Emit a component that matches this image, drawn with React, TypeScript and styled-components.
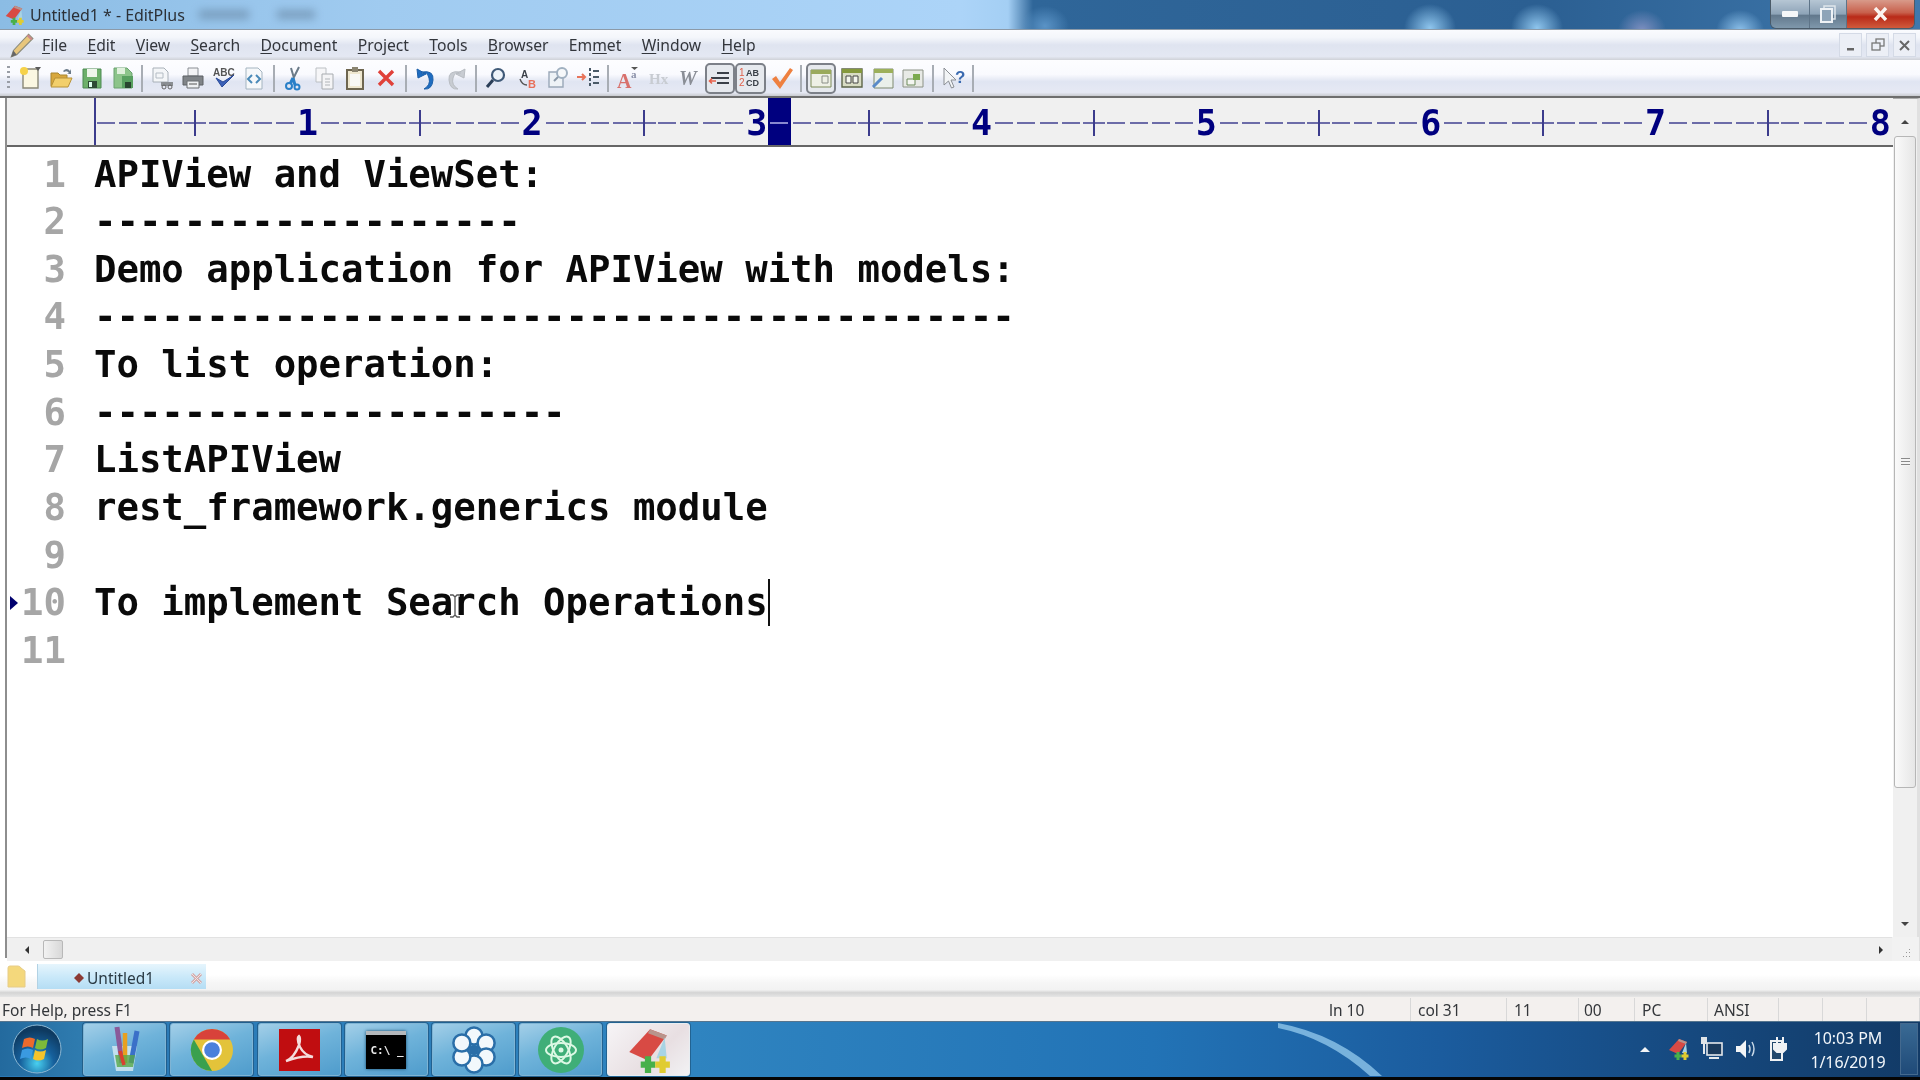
import React from "react";
import styled, { createGlobalStyle } from "styled-components";

const Global = createGlobalStyle`
  html, body { margin: 0; padding: 0; background: #000; }
  * { box-sizing: border-box; }
`;

const Page = styled.div`
  width: 1920px; height: 1080px; display: flex; flex-direction: column; overflow: hidden;
  font-family: "Noto Sans", "Open Sans", sans-serif; background: #fff; filter: blur(0.55px); position: relative;
`;

/* ---------- title bar ---------- */
const TitleBar = styled.div`
  height: 30px; flex: none; display: flex; align-items: center; padding-left: 3px; position: relative;
  background:
    radial-gradient(ellipse 26px 24px at 1430px 28px, #8fc6ee 0%, rgba(143,198,238,0) 100%),
    radial-gradient(ellipse 26px 24px at 1537px 28px, #8fc6ee 0%, rgba(143,198,238,0) 100%),
    radial-gradient(ellipse 24px 20px at 1642px 30px, #7d8fc0 0%, rgba(125,143,192,0) 100%),
    radial-gradient(ellipse 24px 20px at 1740px 30px, #8cc0ea 0%, rgba(140,192,234,0) 100%),
    radial-gradient(ellipse 24px 20px at 1045px 26px, #5a93c6 0%, rgba(90,147,198,0) 100%),
    linear-gradient(90deg, #8bbce4 0%, #a0cbf0 20%, #acd4f8 50%, #a4cff4 52.500%, #2f6699 53.800%, #2b5f92 80%, #3f78ac 100%);
  border-bottom: 1px solid #8c9aa8;
`;
const TitleText = styled.span`
  font-size: 16px; color: #2c3036; margin-left: 5px; white-space: nowrap; letter-spacing: -0.05px;
`;
const Smudge = styled.span<{ $w: number; $ml: number }>`
  width: ${(p) => p.$w}px; margin-left: ${(p) => p.$ml}px; height: 9px; background: #6c8caa; filter: blur(4px); opacity: .7;
`;
const WinControls = styled.div`
  margin-left: auto; margin-right: 5px; display: flex; height: 29px; align-self: flex-start;
  border: 1px solid #4a5a68; border-top: 0; border-radius: 0 0 6px 6px; overflow: hidden;
`;
const WinBtn = styled.div<{ $w: number; $close?: boolean }>`
  width: ${(p) => p.$w}px; display: flex; align-items: center; justify-content: center;
  background: ${(p) => p.$close ? "linear-gradient(180deg,#d89a8a 0%,#c8604c 45%,#b92a18 60%,#d05a3c 100%)" : "linear-gradient(180deg,#b6c6d4 0%,#8ea4b8 50%,#62788c 55%,#7f98ac 100%)"};
  border-right: ${(p) => p.$close ? "0" : "1px solid #5e7488"};
`;

/* ---------- menu bar ---------- */
const MenuBar = styled.div`
  height: 30px; flex: none; display: flex; align-items: center; padding-left: 8px;
  background: linear-gradient(180deg, #fafbfe 0%, #f4f6fb 25%, #dfe4f0 50%, #e4e8f3 88%, #cfd2d8 100%);
`;
const MenuItems = styled.div`
  display: flex; gap: 20.3px; margin-left: 8px; font-size: 15.7px; color: #33363c;
  u { text-underline-offset: 2px; text-decoration-thickness: 1px; }
`;
const MdiGroup = styled.div`
  margin-left: auto; margin-right: 4px; display: flex; gap: 4px;
`;
const MdiBtn = styled.div`
  width: 23px; height: 24px; display: flex; align-items: center; justify-content: center;
  border: 1px solid #d4dae6; background: #eceff6;
`;

/* ---------- toolbar ---------- */
const ToolBar = styled.div`
  height: 38px; flex: none; display: flex; align-items: center; padding-left: 7px;
  background: linear-gradient(180deg, #fdfdff 0%, #f9fafe 40%, #e0e5f2 60%, #e6e9f4 90%, #c9cbd0 100%);
  border-bottom: 2px solid #6e6e6e;
`;
const Grip = styled.div`
  width: 3px; height: 24px; margin-right: 5px;
  background: repeating-linear-gradient(180deg, #9a9ea6 0 2px, transparent 2px 5px);
`;
const Slot = styled.div<{ $on?: boolean }>`
  width: 30.75px; height: 31px; flex: none; display: flex; align-items: center; justify-content: center;
  ${(p) => p.$on && "border: 2px solid #7c8088; border-radius: 5px; background: #e6e9ee;"}
`;
const Sep = styled.div`
  width: 2px; height: 27px; margin: 0 3.4px; background: #a8adb4; flex: none;
`;

/* ---------- editor ---------- */
const Workspace = styled.div`
  flex: 1; min-height: 0; display: flex; background: #fff;
`;
const LeftEdge = styled.div`
  width: 7px; flex: none; margin-bottom: 3px; border-right: 2px solid #8e8e8e; background: #fff;
`;
const EditorColumn = styled.div`
  width: 1886px; flex: none; display: flex; flex-direction: column; min-height: 0;
`;
const Ruler = styled.div`
  height: 49px; flex: none; display: flex; background: #f0f0f0; padding-left: 87px; border-bottom: 2px solid #666;
`;
const RulerCell = styled.div<{ $hot?: boolean; $first?: boolean }>`
  width: 22.47px; flex: none; height: 47px; position: relative; display: flex; align-items: center; justify-content: center;
  padding-top: 3px;
  font: bold 35px "DejaVu Sans Mono", monospace; color: #00007f; line-height: 44px;
  background: ${(p) => p.$hot ? "#00007f" : "transparent"};
  ${(p) => p.$first && "border-left: 2px solid #3c3c8c;"}
`;
const Dash = styled.span<{ $hot?: boolean }>`
  width: 18px; height: 2px; background: ${(p) => p.$hot ? "#8888d0" : "#6c6ca8"};
`;
const Tick = styled.span`
  width: 100%; height: 2px; background: #6c6ca8; display: flex; justify-content: center; align-items: center;
  &::after { content: ""; width: 2px; height: 26px; background: #3c3c8c; flex: none; }
`;
const Body = styled.div`
  flex: 1; min-height: 0; padding-top: 3.5px; position: relative; background: #fff;
`;
const Row = styled.div`
  height: 47.64px; display: flex; align-items: center; white-space: pre;
  font: bold 37.3px/47.64px "DejaVu Sans Mono", monospace; color: #0a0a0a;
`;
const Marker = styled.div`
  width: 12px; flex: none; padding-left: 3px; display: flex; align-items: center;
`;
const Num = styled.div`
  width: 47px; flex: none; text-align: right; color: #a6a6a6;
`;
const Code = styled.div`
  margin-left: 28px; display: flex; align-items: center;
`;
const Caret = styled.span`
  width: 2.5px; height: 47px; background: #111; flex: none;
`;
const IBeam = styled.svg`
  position: absolute; left: 441px; top: 447px;
`;
const HScroll = styled.div`
  height: 24px; flex: none; display: flex; align-items: center; background: #f0f0f0; border-top: 1px solid #e2e2e2; padding-left: 9px;
`;
const ScrollArrow = styled.div`
  width: 22px; display: flex; justify-content: center; flex: none;
`;
const HThumb = styled.div`
  width: 20px; height: 19px; border: 1px solid #b8b8b8; border-radius: 2px; margin-left: 5px;
  background: linear-gradient(90deg, #f2f2f2, #d8d8d8);
`;
const RightArrowWrap = styled.div`
  margin-left: auto; margin-right: 1px; display: flex;
`;
const VScroll = styled.div`
  width: 27px; flex: none; display: flex; flex-direction: column; align-items: center; background: #f0f0f0;
  border-right: 3px solid #e0e0e0; border-top: 1px solid #aaa;
`;
const VArrow = styled.div<{ $h: number; $pt?: number }>`
  height: ${(p) => p.$h}px; padding-top: ${(p) => p.$pt ?? 0}px; display: flex; align-items: center; justify-content: center; flex: none;
`;
const VThumb = styled.div`
  width: 22px; height: 652px; flex: none; display: flex; align-items: center; justify-content: center;
  border: 1px solid #b6b6b6; border-radius: 3px; background: linear-gradient(90deg,#fafafa,#e6e6e6);
`;
const GripLines = styled.div`
  width: 9px; height: 8px; background: repeating-linear-gradient(180deg,#8a8a8a 0 1px,#f4f4f4 1px 3px);
`;
const VSpacer = styled.div`
  flex: 1;
`;
const SizeGrip = styled.div`
  width: 27px; height: 24px; flex: none; display: flex; align-items: flex-end; justify-content: center; padding-bottom: 3px; background: #f2f2f2;
`;

/* ---------- tabs + status ---------- */
const TabBar = styled.div`
  height: 36px; flex: none; display: flex; padding: 3px 0 8px 7px; align-items: stretch;
  background: linear-gradient(180deg, #ffffff 0%, #ffffff 38%, #f6f6f6 60%, #f2f2f2 80%, #d4d4d4 88%, #e6e6e6 100%);
`;
const FolderSlot = styled.div`
  width: 30px; flex: none; display: flex; align-items: center;
`;
const Tab = styled.div`
  width: 169px; display: flex; align-items: center; padding: 3px 0 0 36px; font-size: 15.5px; color: #2a3a44; gap: 3px;
  background: linear-gradient(180deg, #e6f5fd 0%, #c8e8f9 55%, #b5ddf4 100%); border-left: 1px solid #b2d2e4;
`;
const TabClose = styled.div`
  margin-left: auto; margin-right: 3px; display: flex;
`;
const StatusBar = styled.div`
  height: 24px; flex: none; display: flex; background: #f3f0ee; font-size: 15.5px; color: #33363a; align-items: center; padding-top: 1px;
`;
const StatusHelp = styled.div`
  flex: 1; padding-left: 2px;
`;
const Pane = styled.div<{ $w: number; $pad: number }>`
  width: ${(p) => p.$w}px; padding-left: ${(p) => p.$pad}px; height: 100%; line-height: 24px; flex: none;
  border-right: 1px solid #d8d8d8;
`;

/* ---------- taskbar ---------- */
const TaskBar = styled.div`
  height: 56px; flex: none; display: flex; align-items: flex-end; position: relative; padding-bottom: 1px;
  background: linear-gradient(90deg, #2a78b4 0%, #2f84c0 36%, #2273b6 60%, #1b5c9e 75%, #16497f 88%, #123a66 100%);
  border-top: 1px solid #56758e;
`;
const Swoosh = styled.svg`
  position: absolute; left: 1278px; top: 0;
`;
const Orb = styled.div`
  width: 83px; height: 54px; flex: none; display: flex; align-items: center; justify-content: center; padding-right: 9px;
  background: linear-gradient(90deg, #236a9e, #2f7cb0);
`;
const TaskButtons = styled.div`
  display: flex; gap: 4.3px; height: 53px; position: relative;
`;
const TaskBtn = styled.div<{ $on?: boolean }>`
  width: 83px; height: 53px; flex: none; display: flex; align-items: center; justify-content: center; border-radius: 3px;
  border: 1px solid ${(p) => p.$on ? "#e8eef2" : "#7fb4d4"};
  background: ${(p) => p.$on ? "linear-gradient(135deg,#f6f4f6,#e8dfe2 60%,#f2f2f4)" : "linear-gradient(160deg,#a3cfe8 0%,#6fb3da 45%,#4f9ccc 100%)"};
  box-shadow: 0 0 0 1px rgba(20,60,90,.45);
`;
const Tray = styled.div`
  margin-left: auto; display: flex; align-items: center; height: 54px; position: relative;
`;
const TrayIcon = styled.div<{ $w: number }>`
  width: ${(p) => p.$w}px; display: flex; align-items: center; justify-content: center; flex: none;
`;
const Clock = styled.div`
  width: 104px; margin-left: 3px; padding-top: 1px; text-align: center; font-size: 16px; line-height: 24px; color: #f2f6fa; letter-spacing: -0.1px;
`;
const ShowDesktop = styled.div`
  width: 18px; height: 52px; margin: 0 2px 0 0; border: 1px solid #44698e; background: linear-gradient(180deg,#3a6a94,#1f4a78);
`;
const BottomEdge = styled.div`
  height: 3px; flex: none; background: #050505;
`;
const CmdBox = styled.div`
  width: 40px; height: 38px; background: linear-gradient(180deg,#b4b8bc 0 4px,#000 4px);
  color: #e8e8e8; font: bold 11px/34px "DejaVu Sans Mono", monospace; padding: 3px 0 0 4px; box-shadow: 0 0 3px #14486c; white-space: pre;
`;

/* ---------- icons ---------- */
type P = { s?: number };
const Svg = ({ s = 24, children }: P & { children: React.ReactNode }) => (
  <svg width={s} height={s} viewBox="0 0 24 24" fill="none" overflow="visible">{children}</svg>
);
const I = {
  pencil: () => (<Svg s={26}><path d="M3 23l2-6L19 2l4 4L8 21z" fill="#e8c67c" stroke="#8a8a7a" /><path d="M3 23l2-6 3 4z" fill="#666" /><path d="M18 3l4 4" stroke="#c88" strokeWidth="2" /></Svg>),
  newf: () => (<Svg><path d="M5 3h15v19H5z" fill="#fbf7e2" stroke="#8a8878" strokeWidth="1.4" /><circle cx="6" cy="5" r="4" fill="#f6d24a" /><path d="M17 1h6l-3 4z" fill="#5a5a5a" /></Svg>),
  open: () => (<Svg><path d="M2 20V7h7l2 2h7v11z" fill="#d8a83e" stroke="#a88630" /><path d="M2 21l4-9h17l-4 9z" fill="#f2cf6c" stroke="#b89238" /><path d="M14 5q4-4 7 0l1-2v5h-4l2-1q-2-3-5-1z" fill="#6a7a88" /></Svg>),
  save: () => (<Svg><path d="M3 3h18v19H3z" fill="#6db06a" stroke="#4c8a52" /><path d="M7 3h10v8H7z" fill="#eef6ea" /><path d="M8 15h9v7H8z" fill="#2e4a34" /><path d="M9 16h3v5H9z" fill="#dfe" /></Svg>),
  saveall: () => (<Svg><path d="M3 2h13l5 5v15H3z" fill="#8cc48a" stroke="#6aa270" /><path d="M6 2h8v6H6z" fill="#e0f0dc" /><path d="M11 10h11v12H11z" fill="#58a060" /><path d="M14 16h6v6h-6z" fill="#29452f" /></Svg>),
  preview: () => (<Svg><path d="M3 2h11l4 4v10H3z" fill="#f4f6f8" stroke="#a8b0b8" /><path d="M6 7h7v5H6z" stroke="#b4bcc4" /><path d="M11 16h12v4H11z" fill="#8a8e92" /><circle cx="14" cy="21" r="2" stroke="#666" /><circle cx="20" cy="21" r="2" stroke="#666" /></Svg>),
  print: () => (<Svg><path d="M7 2h10v8H7z" fill="#f4f4f6" stroke="#8a8e94" /><path d="M2 10h20v9H2z" fill="#808488" stroke="#5c6064" /><path d="M6 15h12v7H6z" fill="#eef0f2" stroke="#6a6e72" /><path d="M8 18h8" stroke="#555" /></Svg>),
  spell: () => (<Svg><text x="1" y="10" fontFamily="Liberation Sans" fontWeight="bold" fontSize="10" fill="#555">ABC</text><path d="M4 12l6 9L22 9l-11 7z" fill="#3a60b8" stroke="#2a4a98" /></Svg>),
  html: () => (<Svg><path d="M4 2h12l4 4v17H4z" fill="#f6f8fa" stroke="#a4b4c0" /><path d="M10 9l-4 4 4 4M14 9l4 4-4 4" stroke="#4a8ab8" strokeWidth="2" /></Svg>),
  cut: () => (<Svg><path d="M17 1l-6 12M9 2l3 10" stroke="#6a7a88" strokeWidth="2" /><path d="M11 12l-3 6M11 12l2 7" stroke="#2a80c8" strokeWidth="3" /><circle cx="7" cy="20" r="3" stroke="#2a80c8" strokeWidth="2" /><circle cx="15" cy="21" r="2.5" stroke="#2a80c8" strokeWidth="2" /></Svg>),
  copy: () => (<Svg><path d="M3 2h10v14H3z" fill="#f6f6f8" stroke="#bcc0c4" /><path d="M9 8h11v15H9z" fill="#f4f4f6" stroke="#a8acb0" /><path d="M12 13h5M12 16h5M12 19h5" stroke="#b0b4b8" /></Svg>),
  paste: () => (<Svg><path d="M4 4h16v19H4z" fill="#efe8d0" stroke="#6e6650" strokeWidth="2" /><path d="M9 1h6v5H9z" fill="#8a8470" /><path d="M7 8h10v12H7z" fill="#f8f8f4" /></Svg>),
  del: () => (<Svg><path d="M5 5l14 14M19 5L5 19" stroke="#e0413a" strokeWidth="3.4" /></Svg>),
  undo: () => (<Svg><path d="M3 3l1 9 8-4zM8 6q12-2 11 8t-9 9q7-4 5-11T8 8z" fill="#1e6cc0" stroke="#1a5ea8" /></Svg>),
  redo: () => (<Svg><path d="M21 3l-1 9-8-4zM16 6Q4 4 5 14t9 9Q7 19 9 12t7-4z" fill="#c8ccd2" stroke="#b8bcc2" /></Svg>),
  find: () => (<Svg><circle cx="14" cy="9" r="6" stroke="#405a78" strokeWidth="2.2" fill="#eef4fa" /><path d="M9 14l-6 7" stroke="#2a3e58" strokeWidth="3" /></Svg>),
  replace: () => (<Svg><text x="6" y="12" fontFamily="Liberation Sans" fontWeight="bold" fontSize="10" fill="#3a4048">A</text><text x="13" y="22" fontFamily="Liberation Sans" fontWeight="bold" fontSize="11" fill="#e8705a">B</text><path d="M5 13q2 6 7 6" stroke="#555" strokeWidth="1.4" /></Svg>),
  fif: () => (<Svg><path d="M3 6h14v15H3z" fill="#eef2f6" stroke="#9aa8b8" strokeWidth="1.4" /><circle cx="16" cy="7" r="5" stroke="#a0b0c0" strokeWidth="2" fill="#f6f8fa" /><path d="M8 15l4-4" stroke="#8a98a8" strokeWidth="2" /></Svg>),
  goto: () => (<Svg><path d="M1 11h7M6 8l3 3-3 3" stroke="#e8745a" strokeWidth="2" /><path d="M14 2v20" stroke="#4a5a68" strokeWidth="2" strokeDasharray="3 2" /><path d="M17 5h6M17 11h6M17 17h6" stroke="#4a5a68" strokeWidth="2.2" /></Svg>),
  font: () => (<Svg><text x="1" y="22" fontFamily="Liberation Serif" fontWeight="bold" fontSize="20" fill="#d8706c">A</text><text x="15" y="12" fontFamily="Liberation Serif" fontWeight="bold" fontSize="11" fill="#8a90a8">a</text><path d="M15 1h7l-3.500 3z" fill="#555" /></Svg>),
  hx: () => (<Svg><text x="2" y="18" fontFamily="Liberation Serif" fontWeight="bold" fontSize="15" fill="#c8ccd2">Hx</text></Svg>),
  w: () => (<Svg><text x="2" y="19" fontFamily="Liberation Serif" fontWeight="bold" fontStyle="italic" fontSize="20" fill="#8a8e96">W</text></Svg>),
  indent: () => (<Svg><path d="M9 7h12M3 12h18M9 17h12" stroke="#3a4048" strokeWidth="2.2" /><path d="M2 15h6M4 12.500l-2.500 2.500L4 17.500" stroke="#e8604a" strokeWidth="1.6" /></Svg>),
  abcd: () => (<Svg><text x="0" y="10" fontFamily="Liberation Sans" fontSize="10" fill="#e0604a">1</text><text x="0" y="20" fontFamily="Liberation Sans" fontSize="10" fill="#e0604a">2</text><text x="7" y="10" fontFamily="Liberation Sans" fontWeight="bold" fontSize="9" fill="#3a4048">AB</text><text x="7" y="20" fontFamily="Liberation Sans" fontWeight="bold" fontSize="9" fill="#3a4048">CD</text></Svg>),
  check: () => (<Svg><path d="M2 13l4-3 4 6L20 2l3 2-13 19z" fill="#ee8040" /></Svg>),
  panel1: () => (<Svg><path d="M2 4h20v17H2z" fill="#eef0e6" stroke="#7c8a58" /><path d="M2 4h20v4H2z" fill="#9aaa5c" /><path d="M13 10h6v7h-6z" stroke="#8a8e88" /></Svg>),
  panel2: () => (<Svg><path d="M2 3h20v18H2z" fill="#d8dcc4" stroke="#5c6448" strokeWidth="1.4" /><path d="M2 3h20v4H2z" fill="#84983c" /><path d="M6 10h5v7H6zM13 10h5v7h-5z" fill="#f4f6ee" stroke="#444" /></Svg>),
  panel3: () => (<Svg><path d="M3 3h19v19H3z" fill="#eaf0ea" stroke="#7e8a70" /><path d="M3 3h19v4H3z" fill="#9cb05a" /><path d="M2 21l9-9" stroke="#5a8ac8" strokeWidth="3" /></Svg>),
  panel4: () => (<Svg><path d="M2 4h20v17H2z" fill="#e8eae6" stroke="#8c9286" /><path d="M6 13h8v6H6z" fill="#f4f6f2" stroke="#6c8a5c" /><path d="M12 8h7v6h-7z" fill="#7caa50" /></Svg>),
  help: () => (<Svg><path d="M3 2l12 12h-5l3 7-2.500 1-3-7L3 19z" fill="#f2f4f6" stroke="#8a8e94" /><text x="14" y="17" fontFamily="Liberation Sans" fontWeight="bold" fontSize="17" fill="#3a6ab0">?</text></Svg>),
  editplus: ({ s = 24 }: P) => (<Svg s={s}><path d="M3 13L13 2l8 3-9 12z" fill="#d84a44" /><path d="M13 2l8 3-1 2-8-3z" fill="#b8948c" /><path d="M20 6l1 10h-5z" fill="#a8d4e4" /><path d="M8.500 17.500h7v3h-7z M10.500 15h3v8h-3z" fill="#48b04a" /><path d="M15.500 17.500h7v3h-7z M17.500 15h3v8h-3z" fill="#e0cc30" /></Svg>),
  folder: () => (<svg width="19" height="23" viewBox="0 0 19 23"><path d="M1 3q0-2 2-2h8q2 0 3 2l4 3v16H1z" fill="#f4d87c" stroke="#e6cc88" /></svg>),
  orb: () => (<svg width="50" height="50" viewBox="0 0 50 50"><defs><radialGradient id="o" cx=".5" cy=".8" r=".7"><stop offset="0" stopColor="#48d0f0" /><stop offset=".5" stopColor="#16609c" /><stop offset="1" stopColor="#0e3a60" /></radialGradient></defs><circle cx="25" cy="25" r="24" fill="url(#o)" stroke="#8cb8d4" /><path d="M12 15q6-3 11 0l-2 9q-5-3-11 0z" fill="#ec6a2c" /><path d="M25 15q5 3 11 0l-2 9q-6 3-11 0z" fill="#7cba3a" /><path d="M10 26q6-3 11 0l-2 9q-5-3-11 0z" fill="#3a9ae0" /><path d="M23 26q5 3 11 0l-2 9q-6 3-11 0z" fill="#f4c42c" /></svg>),
  paints: () => (<svg width="44" height="50" viewBox="0 0 44 50"><path d="M9 21l25 0-4 25H13z" fill="#d8ecf4" opacity=".8" /><path d="M14 2l5 36" stroke="#8a5a9a" strokeWidth="5" /><path d="M22 8v30" stroke="#e8a020" strokeWidth="4.500" /><path d="M34 6l-6 32" stroke="#3a70c8" strokeWidth="5" /><path d="M12 30h20l-2 12H14z" fill="#58a848" opacity=".8" /><path d="M17 26l4 14" stroke="#d84030" strokeWidth="3.500" /></svg>),
  chrome: () => (<svg width="44" height="44" viewBox="-22 -22 44 44"><circle r="21" fill="#e3c33a" /><path d="M-18.200-10.500A21 21 0 0 1 18.200-10.500L0-10.500z" fill="#d8423a" /><path d="M-18.200-10.500L0 21A21 21 0 0 1-18.200-10.500z" fill="#3aa04e" /><circle r="10" fill="#fff" /><circle r="7.800" fill="#4a80dc" /></svg>),
  pdf: () => (<svg width="41" height="42" viewBox="0 0 41 42"><rect width="41" height="42" fill="#c00d10" /><path d="M7 32q8-3 13-16 2-7 0-9-3 2 1 11 4 8 13 10-10-2-27 4z" fill="none" stroke="#f4dcdc" strokeWidth="2.400" /></svg>),
  flower: () => (<svg width="48" height="50" viewBox="-24 -25 48 50">{[0, 60, 120, 180, 240, 300].map((a) => (<circle key={a} cx={14 * Math.sin((a * Math.PI) / 180)} cy={-14 * Math.cos((a * Math.PI) / 180)} r="8.500" fill="#f2f8fc" stroke="#2a6ea8" strokeWidth="2.500" />))}<circle r="5" fill="#2a6ea8" /></svg>),
  atom: () => (<svg width="46" height="46" viewBox="-23 -23 46 46"><circle r="23" fill="#3fae78" /><g fill="none" stroke="#dcf8e4" strokeWidth="2"><ellipse rx="15" ry="7" /><ellipse rx="15" ry="7" transform="rotate(60)" /><ellipse rx="15" ry="7" transform="rotate(120)" /></g><circle r="2.500" fill="#dcf8e4" /></svg>),
};

const Tri = ({ d, c = "#333" }: { d: string; c?: string }) => (
  <svg width="10" height="10" viewBox="0 0 10 10"><path d={d} fill={c} /></svg>
);

type Tool = keyof typeof I | "|";
const TOOLS: { k: Tool; on?: boolean }[] = [
  { k: "newf" }, { k: "open" }, { k: "save" }, { k: "saveall" }, { k: "|" },
  { k: "preview" }, { k: "print" }, { k: "spell" }, { k: "html" }, { k: "|" },
  { k: "cut" }, { k: "copy" }, { k: "paste" }, { k: "del" }, { k: "|" },
  { k: "undo" }, { k: "redo" }, { k: "|" },
  { k: "find" }, { k: "replace" }, { k: "fif" }, { k: "goto" }, { k: "|" },
  { k: "font" }, { k: "hx" }, { k: "w" }, { k: "indent", on: true }, { k: "abcd", on: true }, { k: "check" }, { k: "|" },
  { k: "panel1", on: true }, { k: "panel2" }, { k: "panel3" }, { k: "panel4" }, { k: "|" },
  { k: "help" }, { k: "|" },
];

const MENUS: [string, string][] = [
  ["F", "ile"], ["E", "dit"], ["V", "iew"], ["S", "earch"], ["D", "ocument"], ["P", "roject"],
  ["T", "ools"], ["B", "rowser"], ["Em|m", "et"], ["W", "indow"], ["H", "elp"],
];

const LINES = [
  "APIView and ViewSet:",
  "-------------------",
  "Demo application for APIView with models:",
  "-----------------------------------------",
  "To list operation:",
  "---------------------",
  "ListAPIView",
  "rest_framework.generics module",
  "",
  "To implement Search Operations",
  "",
];

const PANES: [string, number, number][] = [
  ["ln 10", 82, 0], ["col 31", 96, 7], ["11", 72, 7], ["00", 56, 5], ["PC", 73, 7], ["ANSI", 71, 6], ["", 44, 0], ["", 44, 0],
];

export default function App() {
  const cells = Array.from({ length: 80 }, (_, i) => i);
  return (
    <Page>
      <Global />
      <TitleBar>
        <I.editplus s={22} />
        <TitleText>Untitled1 * - EditPlus</TitleText>
        <Smudge $w={50} $ml={14} />
        <Smudge $w={38} $ml={28} />
        <WinControls>
          <WinBtn $w={39}><svg width="16" height="6"><rect width="16" height="6" rx="1" fill="#f4f6f8" /></svg></WinBtn>
          <WinBtn $w={37}><svg width="16" height="18" viewBox="0 0 16 18" fill="none"><rect x="4" y="1" width="11" height="13" stroke="#dfe6ec" strokeWidth="1.500" /><rect x="1" y="4" width="11" height="13" stroke="#eef2f6" strokeWidth="2" fill="#8ea4b8" /></svg></WinBtn>
          <WinBtn $w={67} $close><svg width="15" height="14" viewBox="0 0 15 14"><path d="M2 1l11 12M13 1L2 13" stroke="#fbf4f0" strokeWidth="3.400" /></svg></WinBtn>
        </WinControls>
      </TitleBar>

      <MenuBar>
        <I.pencil />
        <MenuItems>
          {MENUS.map(([a, b]) => {
            const parts = a.split("|");
            return parts.length > 1 ? (
              <span key={a}>{parts[0]}<u>{parts[1]}</u>{b}</span>
            ) : (
              <span key={a}><u>{a}</u>{b}</span>
            );
          })}
        </MenuItems>
        <MdiGroup>
          <MdiBtn><svg width="12" height="12"><rect x="2" y="9" width="7" height="2.500" fill="#666" /></svg></MdiBtn>
          <MdiBtn><svg width="14" height="14" viewBox="0 0 14 14" fill="none" stroke="#777" strokeWidth="1.300"><rect x="5" y="1" width="8" height="7" /><rect x="1" y="5" width="8" height="7" fill="#eceff6" /></svg></MdiBtn>
          <MdiBtn><svg width="13" height="13" viewBox="0 0 13 13"><path d="M2 2l9 9M11 2l-9 9" stroke="#666" strokeWidth="2" /></svg></MdiBtn>
        </MdiGroup>
      </MenuBar>

      <ToolBar>
        <Grip />
        {TOOLS.map((t, i) => {
          if (t.k === "|") return <Sep key={i} />;
          const Ico = I[t.k] as React.FC<P>;
          return <Slot key={i} $on={t.on}><Ico /></Slot>;
        })}
      </ToolBar>

      <Workspace>
        <LeftEdge />
        <EditorColumn>
          <Ruler>
            {cells.map((i) => {
              const n = i + 1;
              const hot = i === 30;
              return (
                <RulerCell key={i} $hot={hot} $first={i === 0}>
                  {n % 10 === 0 ? n / 10 : n % 5 === 0 ? <Tick /> : <Dash $hot={hot} />}
                </RulerCell>
              );
            })}
          </Ruler>
          <Body>
            {LINES.map((l, i) => (
              <Row key={i}>
                <Marker>{i === 9 && <svg width="9" height="16" viewBox="0 0 9 16"><path d="M0 1l8 7-8 7z" fill="#00006e" /></svg>}</Marker>
                <Num>{i + 1}</Num>
                <Code>{l}{i === 9 && <Caret />}</Code>
              </Row>
            ))}
            <IBeam width="14" height="24" viewBox="0 0 14 24" fill="none">
              <path d="M2 1h3l2 2 2-2h3M7 3v18M2 23h3l2-2 2 2h3" stroke="#fff" strokeWidth="3" />
              <path d="M2 1h3l2 2 2-2h3M7 3v18M2 23h3l2-2 2 2h3" stroke="#555" strokeWidth="1.300" />
            </IBeam>
          </Body>
          <HScroll>
            <ScrollArrow><Tri d="M7 1L3 5l4 4z" /></ScrollArrow>
            <HThumb />
            <RightArrowWrap><ScrollArrow><Tri d="M3 1l4 4-4 4z" /></ScrollArrow></RightArrowWrap>
          </HScroll>
        </EditorColumn>
        <VScroll>
          <VArrow $h={37} $pt={8}><Tri d="M1 7l4-4 4 4z" c="#444" /></VArrow>
          <VThumb><GripLines /></VThumb>
          <VSpacer />
          <VArrow $h={26}><Tri d="M1 3l4 4 4-4z" c="#444" /></VArrow>
          <SizeGrip><svg width="12" height="10"><path d="M10 1h1v1h-1zM7 4h1v1H7zM10 4h1v1h-1zM4 8h1v1H4zM7 8h1v1H7zM10 8h1v1h-1z" fill="#999" /></svg></SizeGrip>
        </VScroll>
      </Workspace>

      <TabBar>
        <FolderSlot><I.folder /></FolderSlot>
        <Tab>
          <svg width="10" height="10" viewBox="0 0 10 10"><path d="M5 0l5 5-5 5-5-5z" fill="#8c3a34" /></svg>
          Untitled1
          <TabClose><svg width="13" height="13" viewBox="0 0 13 13"><path d="M2 2l9 9M11 2l-9 9" stroke="#d4a8a8" strokeWidth="3" /><path d="M2 2l9 9M11 2l-9 9" stroke="#f0e4e4" strokeWidth="1" /></svg></TabClose>
        </Tab>
      </TabBar>

      <StatusBar>
        <StatusHelp>For Help, press F1</StatusHelp>
        {PANES.map(([t, w, pad], i) => (
          <Pane key={i} $w={w} $pad={pad}>{t}</Pane>
        ))}
        <Pane $w={53} $pad={0} />
      </StatusBar>

      <TaskBar>
        <Swoosh width="140" height="54" viewBox="0 0 140 54" fill="none">
          <path d="M0 1Q60 12 104 54L92 54Q50 16 0 6z" fill="#8ec6ea" opacity=".8" />
        </Swoosh>
        <Orb><I.orb /></Orb>
        <TaskButtons>
          <TaskBtn><I.paints /></TaskBtn>
          <TaskBtn><I.chrome /></TaskBtn>
          <TaskBtn><I.pdf /></TaskBtn>
          <TaskBtn><CmdBox>C:\ _</CmdBox></TaskBtn>
          <TaskBtn><I.flower /></TaskBtn>
          <TaskBtn><I.atom /></TaskBtn>
          <TaskBtn $on><I.editplus s={50} /></TaskBtn>
        </TaskButtons>
        <Tray>
          <TrayIcon $w={32}><Tri d="M0 8l5-5 5 5z" c="#f2f4f6" /></TrayIcon>
          <TrayIcon $w={34}><I.editplus s={24} /></TrayIcon>
          <TrayIcon $w={34}><svg width="24" height="26" viewBox="0 0 24 26" fill="none"><rect x="7" y="7" width="15" height="12" fill="#1a3a5c" stroke="#e4e8ec" strokeWidth="1.600" /><rect x="1" y="1" width="6" height="7" fill="#dfe4e8" /><path d="M4 8v10M9 22h10" stroke="#e4e8ec" strokeWidth="2" /></svg></TrayIcon>
          <TrayIcon $w={33}><svg width="24" height="24" viewBox="0 0 24 24" fill="none"><path d="M2 9h4l6-6v18l-6-6H2z" fill="#f2f4f6" /><path d="M15 8q2 4 0 8M18 5q4 7 0 14" stroke="#c8d8e6" strokeWidth="1.500" /></svg></TrayIcon>
          <TrayIcon $w={31}><svg width="20" height="26" viewBox="0 0 20 26" fill="none"><path d="M3 5h11v19H3z" fill="#22486c" stroke="#f0f2f4" strokeWidth="2" /><path d="M9 1v7M15 1v7M6 8h12v5l-3 3H9l-3-3z" stroke="#f0f2f4" strokeWidth="2" fill="#f0f2f4" /></svg></TrayIcon>
          <Clock>10:03 PM<br />1/16/2019</Clock>
          <ShowDesktop />
        </Tray>
      </TaskBar>
      <BottomEdge />
    </Page>
  );
}
